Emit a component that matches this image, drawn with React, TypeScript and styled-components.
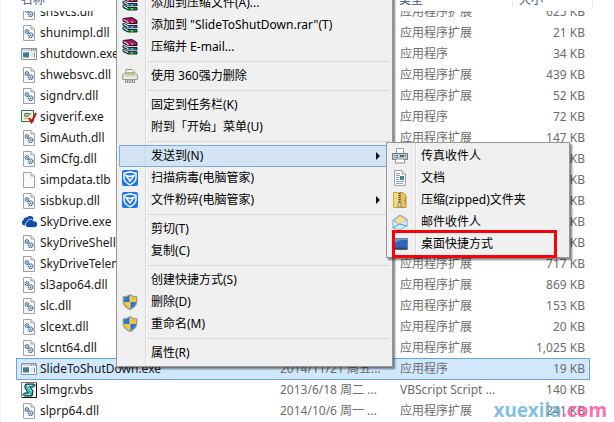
import React from 'react';
import styled, { createGlobalStyle, css } from 'styled-components';

const GlobalStyle = createGlobalStyle`
  * { box-sizing: border-box; }
  html, body { margin: 0; height: 100%; overflow: hidden; background: #fff; }
  body, button, table {
    font-family: 'Noto Sans', 'Noto Sans CJK SC', sans-serif;
    font-size: 12px;
    line-height: 18px;
  }
  #root { height: 100%; }
`;

const Explorer = styled.main`
  position: relative;
  min-height: 100%;
  padding: 0 24px 0 15px;
  border-left: 1px solid #f4f4f4;
`;

const HeaderBar = styled.div`
  display: flex;
  height: 11px;
  margin: 0 -3px 0 -1px;
  position: relative;
  z-index: 1;
  overflow: hidden;
  background: #fff;
  color: #43577b;
`;

const HeaderCell = styled.span<{ $width?: number }>`
  flex: ${(p) => (p.$width ? `0 0 ${p.$width}px` : '1 1 0')};
  height: 7px;
  padding-left: 6px;
  line-height: 0;
  border-right: 1px solid #ececec;
`;

const FileTable = styled.table`
  width: 100%;
  margin-top: -10px;
  table-layout: fixed;
  border-collapse: collapse;
`;

const Cell = styled.td<{ $kind?: 'name' | 'size' | 'text' }>`
  height: 21px;
  padding: 0 0 0 5px;
  white-space: nowrap;
  color: #6d6d6d;
  ${(p) => p.$kind === 'name' && css`color: #1b1b1b;`}
  ${(p) => p.$kind === 'size' && css`padding: 0 5px 0 0; text-align: right;`}
`;

const FileRow = styled.tr<{ $selected?: boolean }>`
  ${(p) => p.$selected && css`
    ${Cell} {
      background: #d1e8ff;
      box-shadow: inset 0 1px #66a7e8, 0 1px #66a7e8;
    }
    ${Cell}:first-child { box-shadow: inset 1px 1px #66a7e8, 0 1px #66a7e8; }
    ${Cell}:last-child { box-shadow: inset -1px 1px #66a7e8, 0 1px #66a7e8; }
  `}
`;

const NameBox = styled.span`
  display: flex;
  align-items: center;
  gap: 3px;
  svg { flex: none; }
`;

const MenuPanel = styled.div<{ $left: number; $top: number; $width: number }>`
  position: absolute;
  z-index: 2;
  left: ${(p) => p.$left}px;
  top: ${(p) => p.$top}px;
  width: ${(p) => p.$width}px;
  padding: 2px;
  border: 1px solid #979797;
  background: linear-gradient(90deg, transparent 28px, #dadada 28px, #dadada 29px, #fafafa 29px, #fafafa 30px, transparent 30px) #f0f0f0;
  box-shadow: 2px 2px 2px rgba(0, 0, 0, 0.5);
`;

const MenuItem = styled.button<{ $active?: boolean }>`
  display: flex;
  align-items: center;
  width: 100%;
  height: 22px;
  padding: 0 9px 0 4px;
  border: 1px solid ${(p) => (p.$active ? '#78aee5' : 'transparent')};
  background: ${(p) => (p.$active ? 'rgba(174, 213, 247, 0.45)' : 'transparent')};
  color: #000;
  text-align: left;
  white-space: nowrap;
`;

const IconSlot = styled.span`
  display: flex;
  flex: 0 0 29px;
  height: 16px;
  margin-left: -2px;
`;

const ItemLabel = styled.span`
  flex: 1;
`;

const Arrow = styled.span`
  border: 4px solid transparent;
  border-left-color: #111;
  border-right: 0;
`;

const Separator = styled.hr`
  height: 1px;
  margin: 3px 0 3px 28px;
  border: 0;
  background: #d7d7d7;
`;

const Highlight = styled.div`
  position: absolute;
  left: 5px;
  right: 12px;
  bottom: -1px;
  height: 28px;
  border: 3px solid #fb0007;
  pointer-events: none;
`;

const Watermark = styled.div`
  position: absolute;
  z-index: 3;
  right: 7px;
  top: 398px;
  font-size: 19px;
  font-weight: 700;
  line-height: 24px;
  color: rgba(90, 170, 215, 0.75);
  pointer-events: none;
`;

const WatermarkTail = styled.span`
  color: rgba(255, 70, 160, 0.8);
`;

type IconName =
  | 'dll' | 'exe' | 'sig' | 'blank' | 'cloud' | 'vbs' | 'rar' | 'shredder' | 'guard'
  | 'shield' | 'fax' | 'document' | 'zip' | 'mail' | 'desktop';

const Sheet = () => (
  <>
    <path d="M2.5.5h7.500l3.500 3.500v11.500h-11z" fill="#fafafa" stroke="#a3a3a3" />
    <path d="M10 .5V4h3.500" fill="#e2e2e2" stroke="#a3a3a3" />
  </>
);

const shieldPath = 'M8 .8C6 2.200 3.800 2.800 1.300 2.800v4.500C1.300 11.500 4.500 14 8 15.500c3.500-1.500 6.700-4 6.700-8.200V2.800C12.200 2.800 10 2.200 8 .8z';

const drawings: Record<IconName, React.ReactNode> = {
  dll: (
    <>
      <Sheet />
      <circle cx="6" cy="6.500" r="1.900" fill="#dcebf5" stroke="#35678f" strokeWidth="1.100" strokeDasharray="1.300 .5" />
      <circle cx="9.600" cy="10.200" r="2.300" fill="#dcebf5" stroke="#35678f" strokeWidth="1.200" strokeDasharray="1.400 .5" />
      <circle cx="6" cy="6.500" r=".7" fill="#35678f" />
      <circle cx="9.600" cy="10.200" r=".8" fill="#35678f" />
    </>
  ),
  blank: <Sheet />,
  exe: (
    <>
      <path d="M.5 2.500h15v11H.5z" fill="#fbfbfb" stroke="#8d9299" />
      <path d="M1 3h14v2H1z" fill="#ccd3da" />
      <path d="M10 3.500h1v1h-1zM12 3.500h1v1h-1zM14 3.500h1v1h-1z" fill="#596470" />
      <path d="M2 6.500h6v5H2z" fill="#3f7f85" />
      <path d="M2 6.500h6v2H2z" fill="#4b78a8" />
      <path d="M9.500 6.500h3v5h-3z" fill="#dde4e8" />
      <path d="M13.500 6.500v5" stroke="#809098" />
    </>
  ),
  sig: (
    <>
      <path d="M.5 1.500h12v11H.5z" fill="#fff" stroke="#16803a" />
      <path d="M2 3h9v8H2z" fill="#e6f0d9" />
      <path d="M3 5h2l1-1 1 1h3M3 7h5" stroke="#344" fill="none" />
      <path d="M3 9.500h4" stroke="#d8c52c" strokeWidth="1.500" />
      <path d="M8 9l2.500 4L15 4" fill="none" stroke="#c9151b" strokeWidth="2.200" />
    </>
  ),
  cloud: (
    <>
      <path d="M3 11.500a3 3 0 0 1-.5-5.500A3.500 3.500 0 0 1 6 3.200 4.200 4.200 0 0 1 12.500 4L11 8l-6 3.500z" fill="#0d4ba8" />
      <path d="M6.500 13.500a2.800 2.800 0 0 1-.6-5.300A3.600 3.600 0 0 1 12.600 7a3.300 3.300 0 0 1 1.400 6.500z" fill="#0d4ba8" stroke="#fff" strokeWidth=".8" />
    </>
  ),
  vbs: (
    <>
      <path d="M.5.5h15v15H.5z" fill="#f1f3f3" stroke="#777" />
      <path d="M5 2h8l1 1.500-1.500 1.500H9l3 4-1 5H3.500L2 12.500 3.500 11H7L4 6V3.500z" fill="#31bcbc" stroke="#071c24" />
      <path d="M6 4l5 6M5 12.500h5M6.500 3.500h5" stroke="#f5ffff" strokeDasharray="1.500 1" />
      <path d="M15.500 1v14.500H1" fill="none" stroke="#111" />
    </>
  ),
  rar: (
    <>
      <path d="M1 1.500L10 .5l5 3v3H6L1 4z" fill="#a01a6c" stroke="#1c0513" strokeWidth=".9" />
      <path d="M1 6l5 2.500h9V11H6L1 8.500z" fill="#1678c2" stroke="#07142a" strokeWidth=".9" />
      <path d="M1 10l5 2.500h9V15H6l-5-2.500z" fill="#12895b" stroke="#042015" strokeWidth=".9" />
      <path d="M1.500 2.500L6 5v1.500M1.500 7L6 9.500V11M1.500 11L6 13.500" fill="none" stroke="#fff" strokeWidth=".9" />
      <path d="M7 7.500h8M7 11.500h8" stroke="#dadada" strokeWidth=".7" />
      <path d="M10 4v2M10 9v2M10 13v2" stroke="#e5ca42" strokeWidth="1.200" />
    </>
  ),
  shredder: (
    <>
      <path d="M4 5V1.500h6l2 2V5z" fill="#fbf9d8" stroke="#8d9084" />
      <path d="M2.500 5h11l2 2v4.500H.5V7z" fill="#dedede" stroke="#9b9b9b" />
      <path d="M3 6.500h10" stroke="#c6cc62" strokeWidth="1.500" />
      <path d="M2 10h12" stroke="#f4f4f4" />
      <path d="M3.500 12v2.500h2V12M7 12v2.500h2V12M10.500 12v2.500h2V12" fill="none" stroke="#888" />
    </>
  ),
  guard: (
    <>
      <rect width="16" height="16" rx="2" fill="#1a76f5" />
      <path d="M8 1.800l6 1.600v4C14 10.800 11 13.300 8 14.800 5 13.300 2 10.800 2 7.400v-4z" fill="none" stroke="#fff" strokeWidth="1.500" />
      <path d="M4 5.500l4 1 4-1L8 11z" fill="none" stroke="#fff" strokeWidth="1.600" />
    </>
  ),
  shield: (
    <>
      <path d={shieldPath} fill="#f7c62c" />
      <path d="M1.500 3C4 3 6 2.200 8 1v7H1.500zM8 8h6.500C14 12 11 14 8 15z" fill="#2f79cc" />
      <path d={shieldPath} fill="none" stroke="#929aa2" strokeWidth="1.300" />
      <path d="M8 2v12" stroke="#fff8d6" strokeWidth=".6" />
    </>
  ),
  fax: (
    <>
      <path d="M4.500 6V.5h7V6" fill="#fff" stroke="#9aa0a6" />
      <path d="M.5 5.500h15v6H.5z" fill="#c2c7cb" stroke="#737b82" />
      <path d="M2 7h4v3H2z" fill="#5c9bb7" />
      <path d="M3 7v3M2 8.500h4" stroke="#e6f1f5" strokeWidth=".5" />
      <path d="M8 7h4v2H8z" fill="#566068" />
      <path d="M13 7.500h1" stroke="#3eaa54" strokeWidth="1.500" />
      <path d="M4 11h8l1 4H3z" fill="#fff" stroke="#8d9398" />
    </>
  ),
  document: (
    <>
      <Sheet />
      <path d="M4 3.500h4M4 5.500h4M4 7.500h3M4 9.500h3M4 11.500h8M4 13.500h7" stroke="#8ea4b7" />
      <path d="M8 6h4v4H8z" fill="#3d7eae" />
      <path d="M8 10l2-2 2 2z" fill="#68a05b" />
    </>
  ),
  zip: (
    <>
      <path d="M1.500.5h6v15h-6z" fill="#f6d878" stroke="#d2a938" />
      <path d="M8 .5h3l3 3v12H8z" fill="#edc45a" stroke="#bd932f" />
      <path d="M7.500 1v11" stroke="#5f6265" strokeWidth="2.500" strokeDasharray="1 1" />
      <path d="M6 11h3v4H6z" fill="#d5d7d8" stroke="#777" strokeWidth=".7" />
      <path d="M13 6v6" stroke="#536d91" strokeDasharray="1 1" />
    </>
  ),
  mail: (
    <>
      <path d="M1 6l7-5 7 4v7l-7 3.500L1 14z" fill="#b7dcef" stroke="#6c98b3" strokeWidth=".8" />
      <path d="M3 6l5-4 6 3-1 4-6 2z" fill="#ffdf94" stroke="#bfa55c" strokeWidth=".5" />
      <path d="M1 7l6 3 8-4v6l-7 3.500L1 14z" fill="#d3ecfa" stroke="#86b3ce" strokeWidth=".6" />
      <path d="M1 14l6-4 8 2" fill="none" stroke="#3a91c6" strokeWidth=".9" />
    </>
  ),
  desktop: (
    <>
      <path d="M.5 2.500h15v11H.5z" fill="#2e66bd" stroke="#777f8c" />
      <path d="M1 8Q8 3 15 4V3H1z" fill="#69a0df" />
      <path d="M1 11.500h14v2H1z" fill="#354660" />
    </>
  ),
};

const Icon = ({ name }: { name: IconName }) => (
  <svg width="16" height="16" viewBox="0 0 16 16" aria-hidden="true">
    {drawings[name]}
  </svg>
);

interface FileEntry {
  icon: IconName;
  name: string;
  date?: string;
  type?: string;
  size: string;
  selected?: boolean;
}

const EXT = '应用程序扩展';
const APP = '应用程序';

const files: FileEntry[] = [
  { icon: 'dll', name: 'shsvcs.dll', type: EXT, size: '625 KB' },
  { icon: 'dll', name: 'shunimpl.dll', type: EXT, size: '21 KB' },
  { icon: 'exe', name: 'shutdown.exe', type: APP, size: '34 KB' },
  { icon: 'dll', name: 'shwebsvc.dll', type: EXT, size: '439 KB' },
  { icon: 'dll', name: 'signdrv.dll', type: EXT, size: '52 KB' },
  { icon: 'sig', name: 'sigverif.exe', type: APP, size: '72 KB' },
  { icon: 'dll', name: 'SimAuth.dll', type: EXT, size: '147 KB' },
  { icon: 'dll', name: 'SimCfg.dll', size: 'KB' },
  { icon: 'blank', name: 'simpdata.tlb', size: 'KB' },
  { icon: 'dll', name: 'sisbkup.dll', size: 'KB' },
  { icon: 'cloud', name: 'SkyDrive.exe', size: 'KB' },
  { icon: 'dll', name: 'SkyDriveShell.dll', size: 'KB' },
  { icon: 'dll', name: 'SkyDriveTelemetry.dll', type: EXT, size: '717 KB' },
  { icon: 'dll', name: 'sl3apo64.dll', type: EXT, size: '869 KB' },
  { icon: 'dll', name: 'slc.dll', type: EXT, size: '153 KB' },
  { icon: 'dll', name: 'slcext.dll', type: EXT, size: '20 KB' },
  { icon: 'dll', name: 'slcnt64.dll', type: EXT, size: '1,025 KB' },
  { icon: 'exe', name: 'SlideToShutDown.exe', date: '2014/11/21 周五...', type: APP, size: '19 KB', selected: true },
  { icon: 'vbs', name: 'slmgr.vbs', date: '2013/6/18 周二 ...', type: 'VBScript Script ...', size: '140 KB' },
  { icon: 'dll', name: 'slprp64.dll', date: '2014/10/6 周一 ...', type: EXT, size: '241 KB' },
];

interface Entry {
  label: string;
  icon?: IconName;
  submenu?: boolean;
  active?: boolean;
}

const contextGroups: Entry[][] = [
  [
    { icon: 'rar', label: '添加到压缩文件(A)...' },
    { icon: 'rar', label: '添加到 "SlideToShutDown.rar"(T)' },
    { icon: 'rar', label: '压缩并 E-mail...' },
  ],
  [{ icon: 'shredder', label: '使用 360强力删除' }],
  [{ label: '固定到任务栏(K)' }, { label: '附到「开始」菜单(U)' }],
  [
    { label: '发送到(N)', submenu: true, active: true },
    { icon: 'guard', label: '扫描病毒(电脑管家)' },
    { icon: 'guard', label: '文件粉碎(电脑管家)', submenu: true },
  ],
  [{ label: '剪切(T)' }, { label: '复制(C)' }],
  [
    { label: '创建快捷方式(S)' },
    { icon: 'shield', label: '删除(D)' },
    { icon: 'shield', label: '重命名(M)' },
  ],
  [{ label: '属性(R)' }],
];

const sendTo: Entry[] = [
  { icon: 'fax', label: '传真收件人' },
  { icon: 'document', label: '文档' },
  { icon: 'zip', label: '压缩(zipped)文件夹' },
  { icon: 'mail', label: '邮件收件人' },
  { icon: 'desktop', label: '桌面快捷方式' },
];

const Item = ({ entry }: { entry: Entry }) => (
  <MenuItem type="button" role="menuitem" $active={entry.active}>
    <IconSlot>{entry.icon && <Icon name={entry.icon} />}</IconSlot>
    <ItemLabel>{entry.label}</ItemLabel>
    {entry.submenu && <Arrow />}
  </MenuItem>
);

export default function App() {
  return (
    <>
      <GlobalStyle />
      <Explorer>
        <HeaderBar>
          <HeaderCell>名称</HeaderCell>
          <HeaderCell $width={119} />
          <HeaderCell $width={120}>类型</HeaderCell>
          <HeaderCell $width={80}>大小</HeaderCell>
        </HeaderBar>
        <FileTable>
          <colgroup>
            <col />
            <col width="120" />
            <col width="120" />
            <col width="75" />
          </colgroup>
          <tbody>
            {files.map((file) => (
              <FileRow key={file.name} $selected={file.selected}>
                <Cell $kind="name">
                  <NameBox>
                    <Icon name={file.icon} />
                    {file.name}
                  </NameBox>
                </Cell>
                <Cell>{file.date}</Cell>
                <Cell>{file.type}</Cell>
                <Cell $kind="size">{file.size}</Cell>
              </FileRow>
            ))}
          </tbody>
        </FileTable>

        <MenuPanel role="menu" $left={115} $top={-11} $width={277}>
          {contextGroups.map((group, index) => (
            <React.Fragment key={index}>
              {index > 0 && <Separator />}
              {group.map((entry) => (
                <Item key={entry.label} entry={entry} />
              ))}
            </React.Fragment>
          ))}
        </MenuPanel>

        <MenuPanel role="menu" $left={385} $top={142} $width={184}>
          {sendTo.map((entry) => (
            <Item key={entry.label} entry={entry} />
          ))}
          <Highlight />
        </MenuPanel>

        <Watermark>
          xuexila<WatermarkTail>.com</WatermarkTail>
        </Watermark>
      </Explorer>
    </>
  );
}
